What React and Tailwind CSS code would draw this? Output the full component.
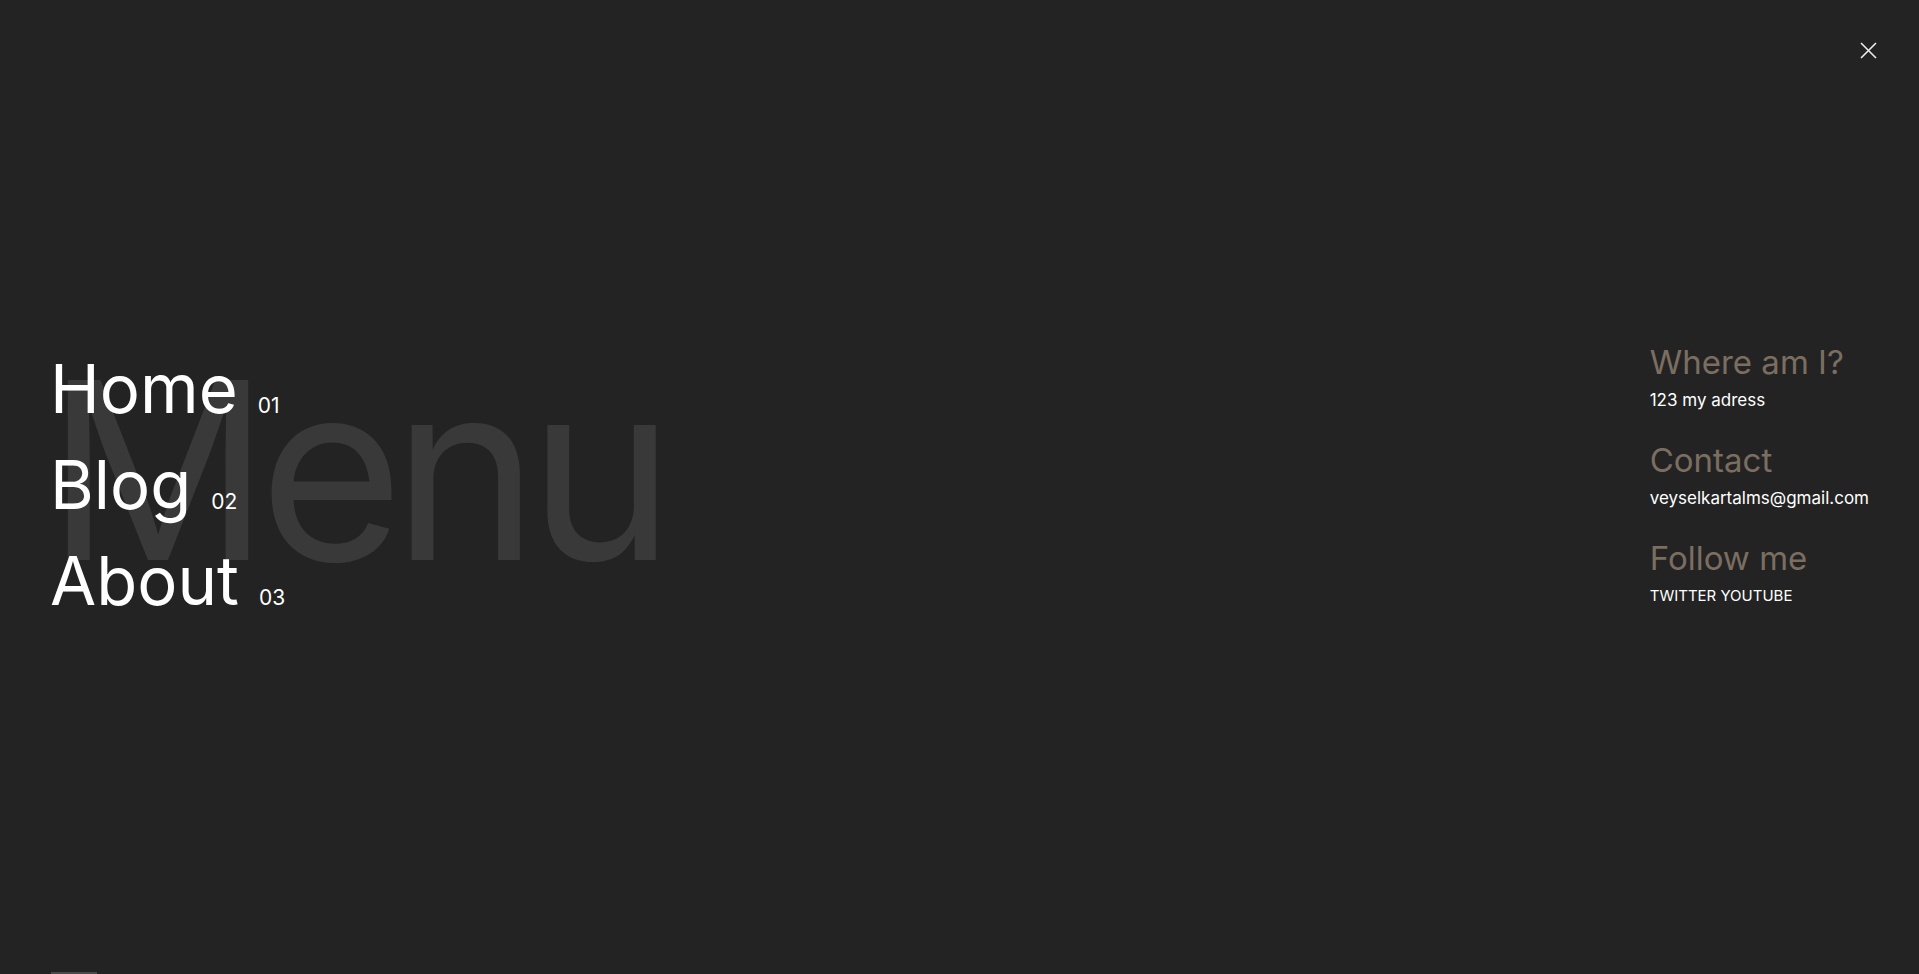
import { useState } from 'react';

const links = [
  { label: 'Home', num: '01' },
  { label: 'Blog', num: '02' },
  { label: 'About', num: '03' },
];

const info = [
  { title: 'Where am I?', text: '123 my adress', size: 'text-[17px]' },
  { title: 'Contact', text: 'veyselkartalms@gmail.com', size: 'text-[17px]' },
  { title: 'Follow me', text: 'TWITTER YOUTUBE', size: 'text-[15px]' },
];

export default function App() {
  const [open, setOpen] = useState(true);

  return (
    <div className="relative h-screen w-full overflow-hidden bg-[#232323] font-['Inter',sans-serif] text-white">
      <button
        type="button"
        onClick={() => setOpen(!open)}
        className="absolute right-[35px] top-[34px] flex h-8 w-8 items-center justify-center"
        aria-label="Close menu"
      >
        <svg width="17" height="17" viewBox="0 0 17 17" fill="none" stroke="#ececec" strokeWidth="1.6">
          <path d="M1 1L16 16M16 1L1 16" />
        </svg>
      </button>

      <main className="flex h-full items-center justify-between px-[50px]">
        <nav className="relative mb-[5px]">
          <span className="pointer-events-none absolute left-[-4px] top-[5px] select-none whitespace-nowrap text-[248px] leading-none tracking-[-11px] text-[#393939]">
            Menu
          </span>
          <ul className="relative">
            {links.map((l) => (
              <li key={l.label} className="flex h-[96px] items-baseline text-[67px] leading-[96px]">
                <a href="#">{l.label}</a>
                <span className="ml-[20px] text-[21px] leading-none">{l.num}</span>
              </li>
            ))}
          </ul>
        </nav>

        <aside className="mb-[24px] flex flex-col gap-[28px]">
          {info.map((s) => (
            <section key={s.title}>
              <h3 className="text-[33px] leading-[40px] text-[#7b6e61]">{s.title}</h3>
              <p className={`mt-[6px] leading-[24px] text-white ${s.size}`}>{s.text}</p>
            </section>
          ))}
        </aside>
      </main>

      <div className="absolute bottom-0 left-[51px] h-[2px] w-[46px] bg-[#4a4a4a]" />
    </div>
  );
}
